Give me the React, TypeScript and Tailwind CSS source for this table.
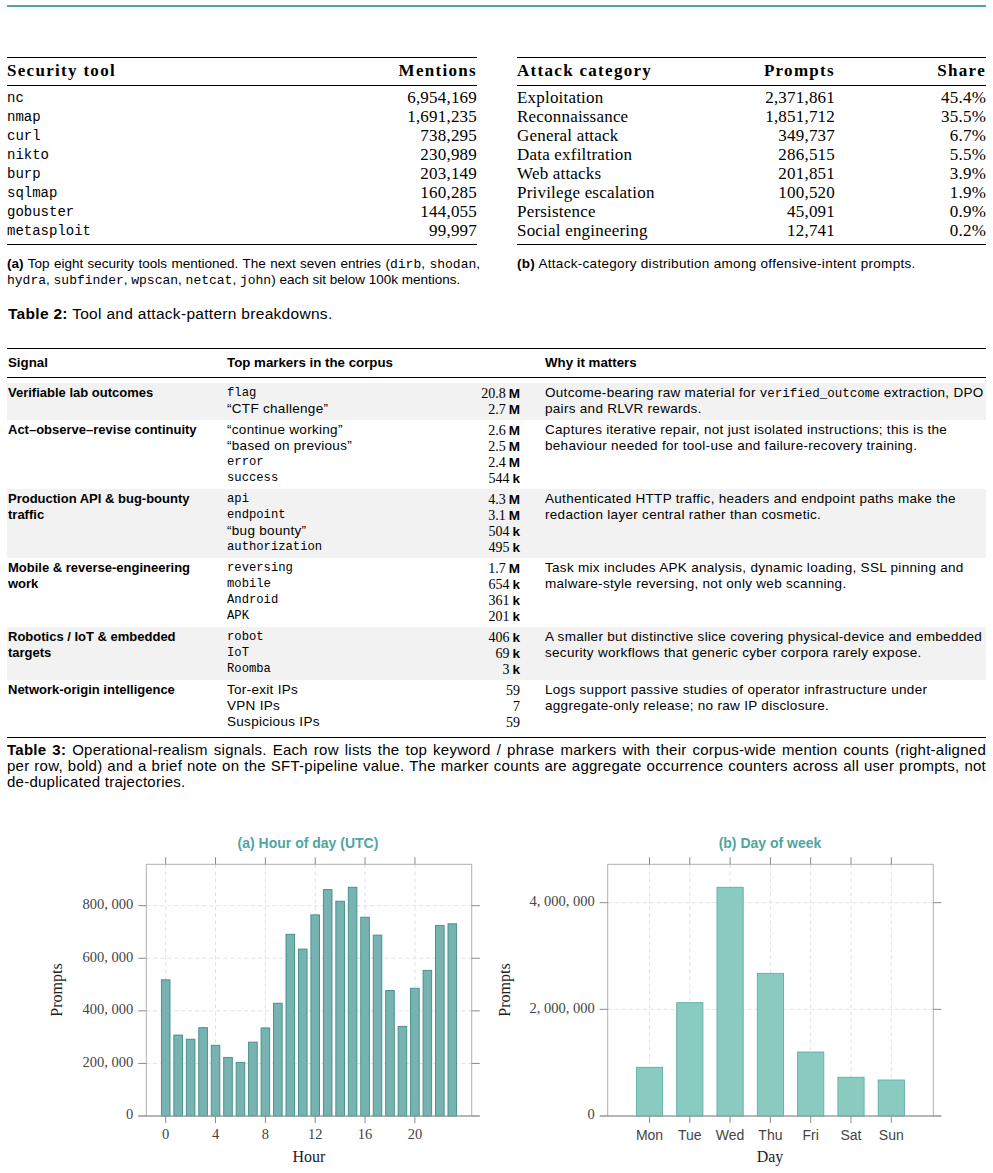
import React from 'react';

const hourData = [518, 308, 292, 336, 269, 223, 204, 281, 335, 429, 691, 635, 765, 861, 817, 870, 756, 688, 477, 341, 486, 554, 725, 731];
const dayData = [
  { d: 'Mon', v: 913 },
  { d: 'Tue', v: 2125 },
  { d: 'Wed', v: 4288 },
  { d: 'Thu', v: 2675 },
  { d: 'Fri', v: 1200 },
  { d: 'Sat', v: 726 },
  { d: 'Sun', v: 675 },
];

const toolRows = [
  ['nc', '6,954,169'],
  ['nmap', '1,691,235'],
  ['curl', '738,295'],
  ['nikto', '230,989'],
  ['burp', '203,149'],
  ['sqlmap', '160,285'],
  ['gobuster', '144,055'],
  ['metasploit', '99,997'],
];

const attackRows = [
  ['Exploitation', '2,371,861', '45.4%'],
  ['Reconnaissance', '1,851,712', '35.5%'],
  ['General attack', '349,737', '6.7%'],
  ['Data exfiltration', '286,515', '5.5%'],
  ['Web attacks', '201,851', '3.9%'],
  ['Privilege escalation', '100,520', '1.9%'],
  ['Persistence', '45,091', '0.9%'],
  ['Social engineering', '12,741', '0.2%'],
];

type Marker = { t: string; mono?: boolean; n: string; u?: string };
type Signal = { name: string[]; shaded: boolean; markers: Marker[]; why: React.ReactNode[] };

// inline typewriter text, used inside captions and notes
const Tt = ({ children }: { children: React.ReactNode }) => (
  <span className="font-['Liberation_Mono',monospace] text-[13px] tracking-normal">{children}</span>
);

const signals: Signal[] = [
  {
    name: ['Verifiable lab outcomes'],
    shaded: true,
    markers: [
      { t: 'flag', mono: true, n: '20.8', u: 'M' },
      { t: '\u201CCTF challenge\u201D', n: '2.7', u: 'M' },
    ],
    why: [
      <>Outcome-bearing raw material for <span className="font-['Liberation_Mono',monospace] text-[12.5px] tracking-normal">verified_outcome</span> extraction, DPO</>,
      'pairs and RLVR rewards.',
    ],
  },
  {
    name: ['Act\u2013observe\u2013revise continuity'],
    shaded: false,
    markers: [
      { t: '\u201Ccontinue working\u201D', n: '2.6', u: 'M' },
      { t: '\u201Cbased on previous\u201D', n: '2.5', u: 'M' },
      { t: 'error', mono: true, n: '2.4', u: 'M' },
      { t: 'success', mono: true, n: '544', u: 'k' },
    ],
    why: [
      'Captures iterative repair, not just isolated instructions; this is the',
      'behaviour needed for tool-use and failure-recovery training.',
    ],
  },
  {
    name: ['Production API & bug-bounty', 'traffic'],
    shaded: true,
    markers: [
      { t: 'api', mono: true, n: '4.3', u: 'M' },
      { t: 'endpoint', mono: true, n: '3.1', u: 'M' },
      { t: '\u201Cbug bounty\u201D', n: '504', u: 'k' },
      { t: 'authorization', mono: true, n: '495', u: 'k' },
    ],
    why: [
      'Authenticated HTTP traffic, headers and endpoint paths make the',
      'redaction layer central rather than cosmetic.',
    ],
  },
  {
    name: ['Mobile & reverse-engineering', 'work'],
    shaded: false,
    markers: [
      { t: 'reversing', mono: true, n: '1.7', u: 'M' },
      { t: 'mobile', mono: true, n: '654', u: 'k' },
      { t: 'Android', mono: true, n: '361', u: 'k' },
      { t: 'APK', mono: true, n: '201', u: 'k' },
    ],
    why: [
      'Task mix includes APK analysis, dynamic loading, SSL pinning and',
      'malware-style reversing, not only web scanning.',
    ],
  },
  {
    name: ['Robotics / IoT & embedded', 'targets'],
    shaded: true,
    markers: [
      { t: 'robot', mono: true, n: '406', u: 'k' },
      { t: 'IoT', mono: true, n: '69', u: 'k' },
      { t: 'Roomba', mono: true, n: '3', u: 'k' },
    ],
    why: [
      'A smaller but distinctive slice covering physical-device and embedded',
      'security workflows that generic cyber corpora rarely expose.',
    ],
  },
  {
    name: ['Network-origin intelligence'],
    shaded: false,
    markers: [
      { t: 'Tor-exit IPs', n: '59' },
      { t: 'VPN IPs', n: '7' },
      { t: 'Suspicious IPs', n: '59' },
    ],
    why: [
      'Logs support passive studies of operator infrastructure under',
      'aggregate-only release; no raw IP disclosure.',
    ],
  },
];

const SERIF = 'Liberation Serif, serif';
const SANS = 'Liberation Sans, sans-serif';

function Axes({
  left, right, top, bottom, xs, ys, xLabels, yLabels, labelFont,
}: {
  left: number; right: number; top: number; bottom: number;
  xs: number[]; ys: number[]; xLabels: string[]; yLabels: string[]; labelFont: string;
}) {
  return (
    <g>
      {xs.map((x, i) => (
        <line key={'gx' + i} x1={x} x2={x} y1={top} y2={bottom} stroke="#e2e2e2" strokeDasharray="4 3" />
      ))}
      {ys.map((y, i) => (
        <line key={'gy' + i} x1={left} x2={right} y1={y} y2={y} stroke="#e2e2e2" strokeDasharray="4 3" />
      ))}
      <rect x={left} y={top} width={right - left} height={bottom - top} fill="none" stroke="#b0b0b0" />
      {xs.map((x, i) => (
        <g key={'tx' + i}>
          <line x1={x} x2={x} y1={top - 7} y2={top} stroke="#8a8a8a" />
          <line x1={x} x2={x} y1={bottom} y2={bottom + 7} stroke="#8a8a8a" />
          <text x={x} y={bottom + 20} textAnchor="middle" dominantBaseline="middle" fontFamily={labelFont} fontSize={labelFont === SANS ? 14 : 14.5} fill="#444">
            {xLabels[i]}
          </text>
        </g>
      ))}
      {ys.map((y, i) => (
        <g key={'ty' + i}>
          <line x1={left - 8} x2={left} y1={y} y2={y} stroke="#8a8a8a" />
          <line x1={right} x2={right + 8} y1={y} y2={y} stroke="#8a8a8a" />
          <text x={left - 13} y={y} textAnchor="end" dominantBaseline="middle" fontFamily={SERIF} fontSize={14.5} fill="#444">
            {yLabels[i]}
          </text>
        </g>
      ))}
    </g>
  );
}

function HourChart() {
  const left = 146.3, right = 471.7, top = 31.3, bottom = 283;
  const y = (v: number) => bottom - v * 0.2629;
  const x = (h: number) => 165.7 + h * 12.46;
  const xt = [0, 4, 8, 12, 16, 20];
  const yt = [0, 200, 400, 600, 800];
  return (
    <svg width={496} height={340} viewBox="0 0 496 340">
      <text x={308} y={11} textAnchor="middle" dominantBaseline="middle" fontFamily={SANS} fontWeight="bold" fontSize={14} fill="#4fa5a0">
        (a) Hour of day (UTC)
      </text>
      <Axes
        left={left} right={right} top={top} bottom={bottom}
        xs={xt.map(x)} ys={yt.map(y)}
        xLabels={xt.map(String)}
        yLabels={['0', '200, 000', '400, 000', '600, 000', '800, 000']}
        labelFont={SERIF}
      />
      {hourData.map((v, i) => (
        <rect key={i} x={x(i) - 4.3} y={y(v)} width={8.6} height={bottom - y(v)} fill="#77b3b1" stroke="#3f8c88" strokeWidth={0.9} />
      ))}
      <line x1={left - 8} x2={right + 8} y1={bottom} y2={bottom} stroke="#9a9a9a" />
      <text x={309} y={325} textAnchor="middle" dominantBaseline="middle" fontFamily={SERIF} fontSize={16} fill="#222">Hour</text>
      <text x={58} y={157} textAnchor="middle" dominantBaseline="middle" fontFamily={SERIF} fontSize={16} fill="#222" transform="rotate(-90 58 157)">Prompts</text>
    </svg>
  );
}

function DayChart() {
  const left = 111.7, right = 437.3, top = 31.3, bottom = 283;
  const y = (v: number) => bottom - v * 0.05333;
  const x = (i: number) => 153.5 + i * 40.3;
  const yt = [0, 2000, 4000];
  return (
    <svg width={497} height={340} viewBox="0 0 497 340">
      <text x={274} y={11} textAnchor="middle" dominantBaseline="middle" fontFamily={SANS} fontWeight="bold" fontSize={14} fill="#4fa5a0">
        (b) Day of week
      </text>
      <Axes
        left={left} right={right} top={top} bottom={bottom}
        xs={dayData.map((_, i) => x(i))} ys={yt.map(y)}
        xLabels={dayData.map((d) => d.d)}
        yLabels={['0', '2, 000, 000', '4, 000, 000']}
        labelFont={SANS}
      />
      {dayData.map((d, i) => (
        <rect key={d.d} x={x(i) - 13.1} y={y(d.v)} width={26.2} height={bottom - y(d.v)} fill="#8acbc1" stroke="#5eaea2" strokeWidth={0.9} />
      ))}
      <line x1={left - 8} x2={right + 8} y1={bottom} y2={bottom} stroke="#9a9a9a" />
      <text x={274} y={325} textAnchor="middle" dominantBaseline="middle" fontFamily={SERIF} fontSize={16} fill="#222">Day</text>
      <text x={10} y={157} textAnchor="middle" dominantBaseline="middle" fontFamily={SERIF} fontSize={16} fill="#222" transform="rotate(-90 10 157)">Prompts</text>
    </svg>
  );
}

export default function App() {
  return (
    <div className="w-[993px] h-[1173px] overflow-hidden bg-white text-black font-['Liberation_Sans',sans-serif]">
      <div className="pt-[5px] px-[7px]">
        <div className="h-[1.5px] bg-[#4fa5a0]" />
      </div>

      {/* Table 2 */}
      <div className="mt-[50px] px-[7px] flex gap-[40px]">
        <div className="w-[470px]">
          <div className="border-t-[1.5px] border-black" />
          <div className="h-[27px] flex items-center justify-between font-['Liberation_Serif',serif] font-bold text-[17px] tracking-[1.3px]">
            <span>Security tool</span>
            <span>Mentions</span>
          </div>
          <div className="border-t border-black" />
          <div className="pt-[3px] pb-[3px]">
            {toolRows.map(([t, n]) => (
              <div key={t} className="h-[19px] flex items-center justify-between">
                <span className="font-['Liberation_Mono',monospace] text-[14px]">{t}</span>
                <span className="font-['Liberation_Serif',serif] text-[17px] tracking-[0.2px]">{n}</span>
              </div>
            ))}
          </div>
          <div className="border-t-[1.5px] border-black" />
          <div className="mt-[11px] text-[13.5px] leading-[15px] w-[473px]">
            <div className="text-justify [text-align-last:justify] whitespace-nowrap">
              <b>(a)</b> Top eight security tools mentioned. The next seven entries (<Tt>dirb</Tt>, <Tt>shodan</Tt>,
            </div>
            <div className="whitespace-nowrap">
              <Tt>hydra</Tt>, <Tt>subfinder</Tt>, <Tt>wpscan</Tt>, <Tt>netcat</Tt>, <Tt>john</Tt>) each sit below 100k mentions.
            </div>
          </div>
        </div>

        <div className="w-[470px]">
          <div className="border-t-[1.5px] border-black" />
          <div className="h-[27px] flex items-center font-['Liberation_Serif',serif] font-bold text-[17px] tracking-[1.3px]">
            <span className="w-[218px]">Attack category</span>
            <span className="w-[100px] text-right">Prompts</span>
            <span className="flex-1 text-right">Share</span>
          </div>
          <div className="border-t border-black" />
          <div className="pt-[3px] pb-[3px] font-['Liberation_Serif',serif] text-[17px] tracking-[0.2px]">
            {attackRows.map(([c, n, s]) => (
              <div key={c} className="h-[19px] flex items-center">
                <span className="w-[218px]">{c}</span>
                <span className="w-[100px] text-right">{n}</span>
                <span className="flex-1 text-right">{s}</span>
              </div>
            ))}
          </div>
          <div className="border-t-[1.5px] border-black" />
          <div className="mt-[11px] text-[13.5px] leading-[15px] tracking-[0.3px]">
            <b>(b)</b> Attack-category distribution among offensive-intent prompts.
          </div>
        </div>
      </div>

      <div className="mt-[17px] px-[8px] text-[15.5px] leading-[18px] tracking-[0.3px]">
        <b>Table 2:</b> Tool and attack-pattern breakdowns.
      </div>

      {/* Table 3 */}
      <div className="mt-[25px] px-[7px]">
        <div className="border-t-[1.5px] border-black" />
        <div className="h-[28px] flex items-center font-bold text-[13.3px]">
          <span className="w-[220px] pl-[1px]">Signal</span>
          <span className="w-[318px]">Top markers in the corpus</span>
          <span className="flex-1">Why it matters</span>
        </div>
        <div className="border-t border-black" />
        <div className="pt-[5px]">
          {signals.map((s) => (
            <div key={s.name[0]} className={`flex py-[2.5px] leading-[16px] ${s.shaded ? 'bg-[#f2f2f2]' : ''}`}>
              <div className="w-[220px] pl-[1px] font-bold text-[13px]">
                {s.name.map((l) => (
                  <div key={l} className="h-[16px]">{l}</div>
                ))}
              </div>
              <div className="w-[293px]">
                {s.markers.map((m) => (
                  <div key={m.t} className="h-[16px] flex items-center justify-between">
                    <span className={m.mono ? "font-['Liberation_Mono',monospace] text-[12.2px]" : 'text-[13.5px] tracking-[0.3px]'}>{m.t}</span>
                    <span>
                      <span className="font-['Liberation_Serif',serif] text-[14px]">{m.n}</span>
                      {m.u && <span className="font-bold text-[13.5px] ml-[3px]">{m.u}</span>}
                    </span>
                  </div>
                ))}
              </div>
              <div className="flex-1 pl-[25px] text-[13.5px] tracking-[0.3px] whitespace-nowrap">
                {s.why.map((l, i) => (
                  <div key={i} className="h-[16px]">{l}</div>
                ))}
              </div>
            </div>
          ))}
        </div>
        <div className="mt-[4px] border-t-[1.5px] border-black" />
        <div className="mt-[4px] text-[15px] leading-[16px] tracking-[0.25px]">
          <div className="h-[16px] text-justify [text-align-last:justify] whitespace-nowrap">
            <b>Table 3:</b> Operational-realism signals. Each row lists the top keyword / phrase markers with their corpus-wide mention counts (right-aligned
          </div>
          <div className="h-[16px] text-justify [text-align-last:justify] whitespace-nowrap">
            per row, bold) and a brief note on the SFT-pipeline value. The marker counts are aggregate occurrence counters across all user prompts, not
          </div>
          <div className="h-[16px]">de-duplicated trajectories.</div>
        </div>
      </div>

      {/* Figure */}
      <div className="mt-[43px] flex">
        <HourChart />
        <DayChart />
      </div>
    </div>
  );
}
